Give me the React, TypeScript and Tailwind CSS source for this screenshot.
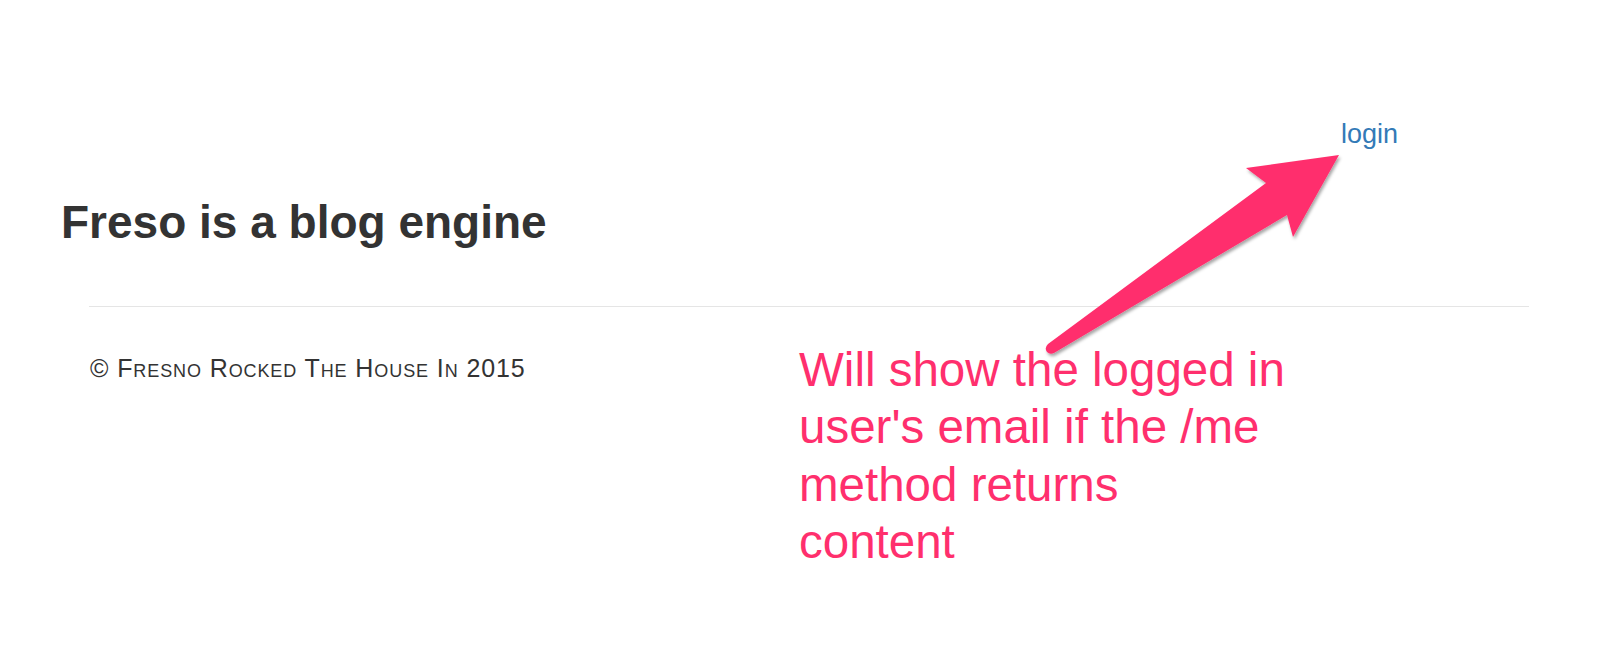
const Arrow = () => {
  return (
    <svg
      className="pointer-events-none absolute left-0 top-0"
      width="1618"
      height="662"
      viewBox="0 0 1618 662"
    >
      <defs>
        <filter id="arrowShadow" x="-10%" y="-10%" width="130%" height="130%">
          <feDropShadow dx="1.5" dy="2.5" stdDeviation="1.6" floodColor="#000" floodOpacity="0.35" />
        </filter>
      </defs>
      <path
        d="M1339 155 L1246 168 L1266 183 L1048 344 Q1044 348 1047 352 Q1050 355 1054 353 L1287 215 L1293 237 Z"
        fill="#ff2f6d"
        filter="url(#arrowShadow)"
      />
    </svg>
  );
};

export default function App() {
  return (
    <div className="relative min-h-screen w-full bg-white font-['Liberation_Sans',Arial,sans-serif] text-[#333]">
      <nav className="flex justify-end pr-[220px] pt-[118px]">
        <a href="#" className="text-[27px] leading-[32px] text-[#337ab7]">
          login
        </a>
      </nav>

      <h1 className="mt-[49px] pl-[61px] text-[46px] font-bold leading-none">
        Freso is a blog engine
      </h1>

      <hr className="mx-[89px] mt-[61px] border-0 border-t border-[#e5e5e5]" />

      <footer className="mt-[45px] pl-[90px]">
        <p className="text-[25px] leading-[32px] tracking-[0.9px] [font-variant:small-caps]">
          © Fresno Rocked The House In 2015
        </p>
      </footer>

      {/* annotation overlay */}
      <p className="absolute left-[799px] top-[341px] text-[47.5px] leading-[57.4px] text-[#ff2f6d]">
        Will show the logged in
        <br />
        user's email if the /me
        <br />
        method returns
        <br />
        content
      </p>
      <Arrow />
    </div>
  );
}
